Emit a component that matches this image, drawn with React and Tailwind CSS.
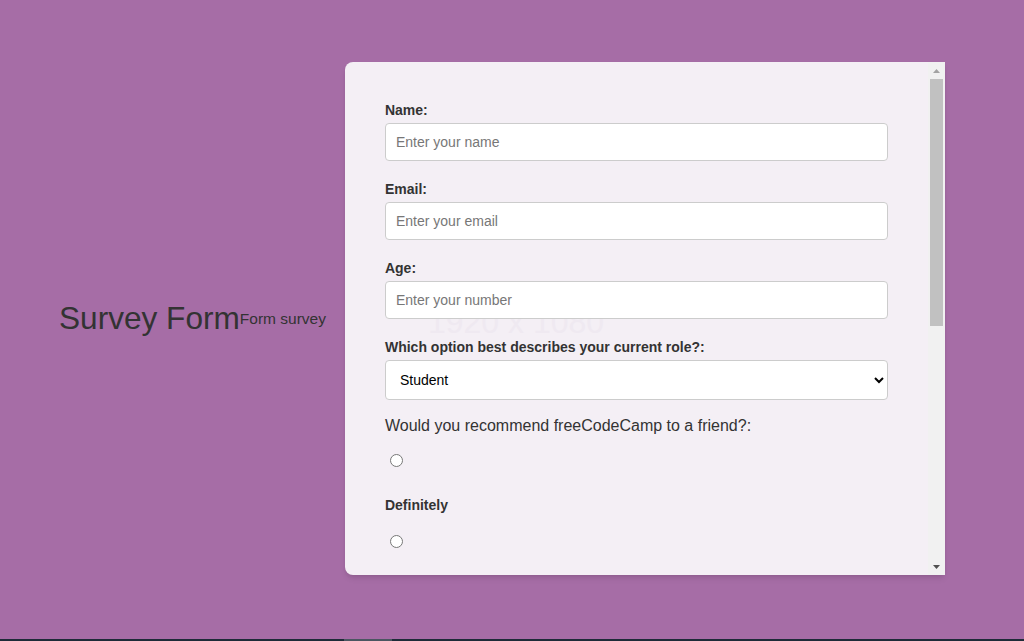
// Survey form page
export default function App() {
  return (
    <div className="h-[641px] flex flex-col bg-[#a66da6] font-['Liberation_Sans',Arial,sans-serif] text-[#333] overflow-hidden">
      <div className="flex-1 pt-[62px] pl-[59px]">
        <div className="flex items-center">
          {/* ── Title ── */}
          <div className="flex items-center mr-[19px]">
            <h1 className="text-[31.6px] leading-none text-[#333]">Survey Form</h1>
            <p className="text-[15.5px] leading-none text-[#333]">Form survey</p>
          </div>

          {/* ── Form card ── */}
          <div className="flex w-[600px] h-[513px] bg-[#f4eff5] rounded-l-lg shadow-md overflow-hidden">
            <div className="relative flex-1 overflow-hidden">
              <div className="absolute left-[83px] top-[244px] text-[32px] leading-none text-[#efe9f1] select-none">1920 x 1080</div>
              <form className="relative px-[40px] pt-[40px] text-[14px]">
                <div className="mb-[20px]">
                  <label className="block font-bold leading-[17px] mb-[4px]">Name:</label>
                  <input type="text" placeholder="Enter your name" className="w-[503px] h-[38px] px-[10px] bg-white border border-[#ccc] rounded-[4px] placeholder:text-[#777] outline-none" />
                </div>
                <div className="mb-[20px]">
                  <label className="block font-bold leading-[17px] mb-[4px]">Email:</label>
                  <input type="email" placeholder="Enter your email" className="w-[503px] h-[38px] px-[10px] bg-white border border-[#ccc] rounded-[4px] placeholder:text-[#777] outline-none" />
                </div>
                <div className="mb-[20px]">
                  <label className="block font-bold leading-[17px] mb-[4px]">Age:</label>
                  <input type="number" placeholder="Enter your number" className="w-[503px] h-[38px] px-[10px] bg-white border border-[#ccc] rounded-[4px] placeholder:text-[#777] outline-none" />
                </div>
                <div className="mb-[17px]">
                  <label className="block font-bold leading-[17px] mb-[4px]">Which option best describes your current role?:</label>
                  <select defaultValue="Student" className="w-[503px] h-[40px] px-[10px] bg-white border border-[#ccc] rounded-[4px] text-black outline-none">
                    <option>Student</option>
                    <option>Full Time Job</option>
                    <option>Full Time Learner</option>
                    <option>Prefer not to say</option>
                    <option>Other</option>
                  </select>
                </div>
                <p className="text-[16px] leading-[18px] mb-[19px]">Would you recommend freeCodeCamp to a friend?:</p>
                <div className="pl-[5px] mb-[30px] h-[13px] flex items-center">
                  <input type="radio" name="rec" className="m-0" />
                </div>
                <label className="block font-bold leading-[17px] mb-[21px]">Definitely</label>
                <div className="pl-[5px] h-[13px] flex items-center">
                  <input type="radio" name="rec" className="m-0" />
                </div>
              </form>
            </div>

            {/* ── Scrollbar ── */}
            <div className="w-[17px] flex flex-col bg-[#f1f1f1]">
              <div className="h-[17px] flex items-center justify-center">
                <svg width="7" height="4" viewBox="0 0 7 4"><path d="M3.5 0 L7 4 L0 4 Z" fill="#a3a3a3" /></svg>
              </div>
              <div className="flex-1 px-[2px]">
                <div className="h-[247px] bg-[#c1c1c1]"></div>
              </div>
              <div className="h-[17px] flex items-center justify-center">
                <svg width="7" height="4" viewBox="0 0 7 4"><path d="M0 0 L7 0 L3.5 4 Z" fill="#505050" /></svg>
              </div>
            </div>
          </div>
        </div>
      </div>
      <div className="h-[2px] flex bg-[#1e2b38]">
        <div className="ml-[344px] w-[48px] bg-[#4b5661]"></div>
      </div>
    </div>
  );
}
